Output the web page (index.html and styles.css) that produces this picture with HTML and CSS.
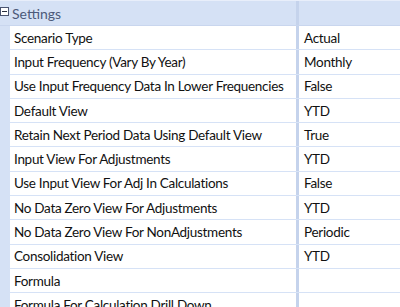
FILE: index.html
```html
<!DOCTYPE html>
<html>
<head>
<meta charset="utf-8">
<link rel="stylesheet" href="styles.css">
</head>
<body>
<div class="grid">
  <div class="header">
    <div class="hname">
      <svg class="toggle" width="9" height="9" viewBox="0 0 9 9"><rect x="0.5" y="0.5" width="8" height="8" fill="#fff" stroke="#4a5470"/><line x1="2" y1="4.5" x2="7" y2="4.5" stroke="#2a3040"/></svg>
      <span>Settings</span>
    </div>
    <div class="sep"></div>
    <div class="hval"></div>
  </div>
  <div class="rows">
    <div class="row"><div class="name">Scenario Type</div><div class="sep"></div><div class="val">Actual</div></div>
    <div class="row"><div class="name">Input Frequency (Vary By Year)</div><div class="sep"></div><div class="val">Monthly</div></div>
    <div class="row"><div class="name">Use Input Frequency Data In Lower Frequencies</div><div class="sep"></div><div class="val">False</div></div>
    <div class="row"><div class="name">Default View</div><div class="sep"></div><div class="val">YTD</div></div>
    <div class="row"><div class="name">Retain Next Period Data Using Default View</div><div class="sep"></div><div class="val">True</div></div>
    <div class="row"><div class="name">Input View For Adjustments</div><div class="sep"></div><div class="val">YTD</div></div>
    <div class="row"><div class="name">Use Input View For Adj In Calculations</div><div class="sep"></div><div class="val">False</div></div>
    <div class="row"><div class="name">No Data Zero View For Adjustments</div><div class="sep"></div><div class="val">YTD</div></div>
    <div class="row"><div class="name">No Data Zero View For NonAdjustments</div><div class="sep"></div><div class="val">Periodic</div></div>
    <div class="row"><div class="name">Consolidation View</div><div class="sep"></div><div class="val">YTD</div></div>
    <div class="row"><div class="name">Formula</div><div class="sep"></div><div class="val"></div></div>
    <div class="row"><div class="name">Formula For Calculation Drill Down</div><div class="sep"></div><div class="val"></div></div>
  </div>
</div>
</body>
</html>
```
FILE: styles.css
```css
html, body {
  margin: 0;
  padding: 0;
  background: #ffffff;
  overflow: hidden;
}
body {
  font-family: "Lato", "Open Sans", sans-serif;
  font-size: 13.5px;
  letter-spacing: -0.3px;
  color: #111111;
  width: 400px;
  height: 307px;
}
.grid {
  display: flex;
  flex-direction: column;
  background: #d5e1f5;
  padding-left: 10px;
}
.header {
  display: grid;
  grid-template-columns: 296px 3px 1fr;
  height: 24px;
  border-top: 1px solid #e8eefa;
  border-bottom: 1px solid #c9d6ee;
  margin-left: -10px;
  background: #d5e1f5;
}
.hname {
  display: flex;
  align-items: center;
  gap: 3px;
  color: #4c5a7a;
  font-size: 14px;
  letter-spacing: 0;
}
.toggle {
  flex: none;
  margin-top: -3px;
}
.sep {
  background: #c5d3ec;
  align-self: stretch;
}
.rows {
  display: flex;
  flex-direction: column;
  background: #ffffff;
}
.row {
  display: grid;
  grid-template-columns: 286px 3px 1fr;
  height: 23.3px;
  border-bottom: 1px solid #d6e2f6;
  align-items: center;
}
.name {
  padding-left: 4px;
  white-space: nowrap;
  overflow: hidden;
}
.val {
  padding-left: 5px;
  white-space: nowrap;
}
```
